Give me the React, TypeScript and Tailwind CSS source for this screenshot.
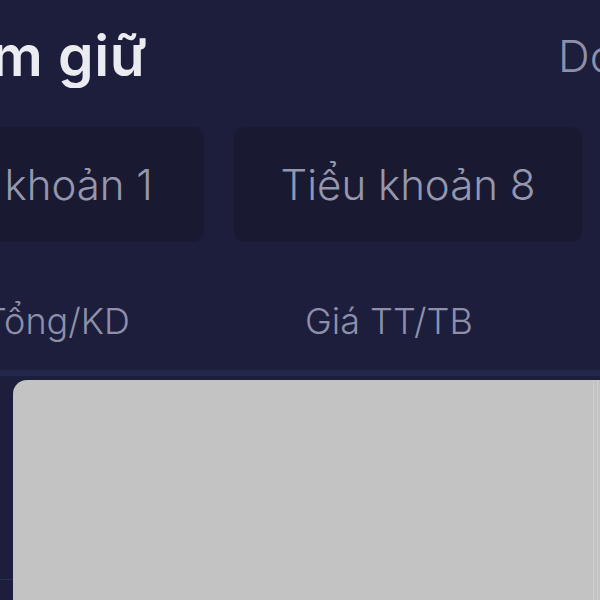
export default function App() {
  return (
    <div className="relative h-[600px] w-[600px] overflow-hidden bg-[#1c1e3c] font-['Inter','Noto_Sans',sans-serif]">
      <header className="flex h-[127px] items-start justify-between pt-[24px]">
        <div className="flex w-[147px] justify-end overflow-hidden">
          <h1 className="whitespace-nowrap text-[57px] font-semibold leading-[64px] tracking-[0.5px] text-[#ebebf2]">
            Danh mục nắm giữ
          </h1>
        </div>
        <div className="w-[42px] overflow-hidden">
          <span className="whitespace-nowrap text-[44px] font-light leading-[64px] text-[#8e90a9]">
            Doanh thu
          </span>
        </div>
      </header>

      <div className="ml-[-144px] flex gap-[30px]">
        {["Tiểu khoản 1", "Tiểu khoản 8"].map((label) => (
          <div
            key={label}
            className="flex h-[115px] w-[348px] shrink-0 items-center justify-center rounded-[10px] bg-[#191a32]"
          >
            <span className="whitespace-nowrap text-[42px] font-light text-[#9597ae]">
              {label}
            </span>
          </div>
        ))}
      </div>

      <div className="flex h-[128px] items-center pt-[30px] text-[36px] font-light text-[#8e90a9]">
        <div className="flex w-[130px] justify-end overflow-hidden">
          <span className="whitespace-nowrap">Tổng/KD</span>
        </div>
        <span className="ml-[175px] whitespace-nowrap">Giá TT/TB</span>
      </div>

      <div className="h-[6px] bg-[#24274c]" />

      <div className="mt-[4px] flex">
        <div className="flex w-[13px] flex-col">
          <div className="h-[199px]" />
          <div className="h-[1px] bg-[#2c2f55]" />
        </div>
        <div className="flex h-[230px] flex-1 rounded-tl-[14px] bg-[#c3c3c3]">
          <div className="flex-1" />
          <div className="w-[1px] bg-[#cdcdcd]" />
          <div className="w-[3px]" />
          <div className="w-[1px] bg-[#cdcdcd]" />
          <div className="w-[2px]" />
        </div>
      </div>
    </div>
  );
}
